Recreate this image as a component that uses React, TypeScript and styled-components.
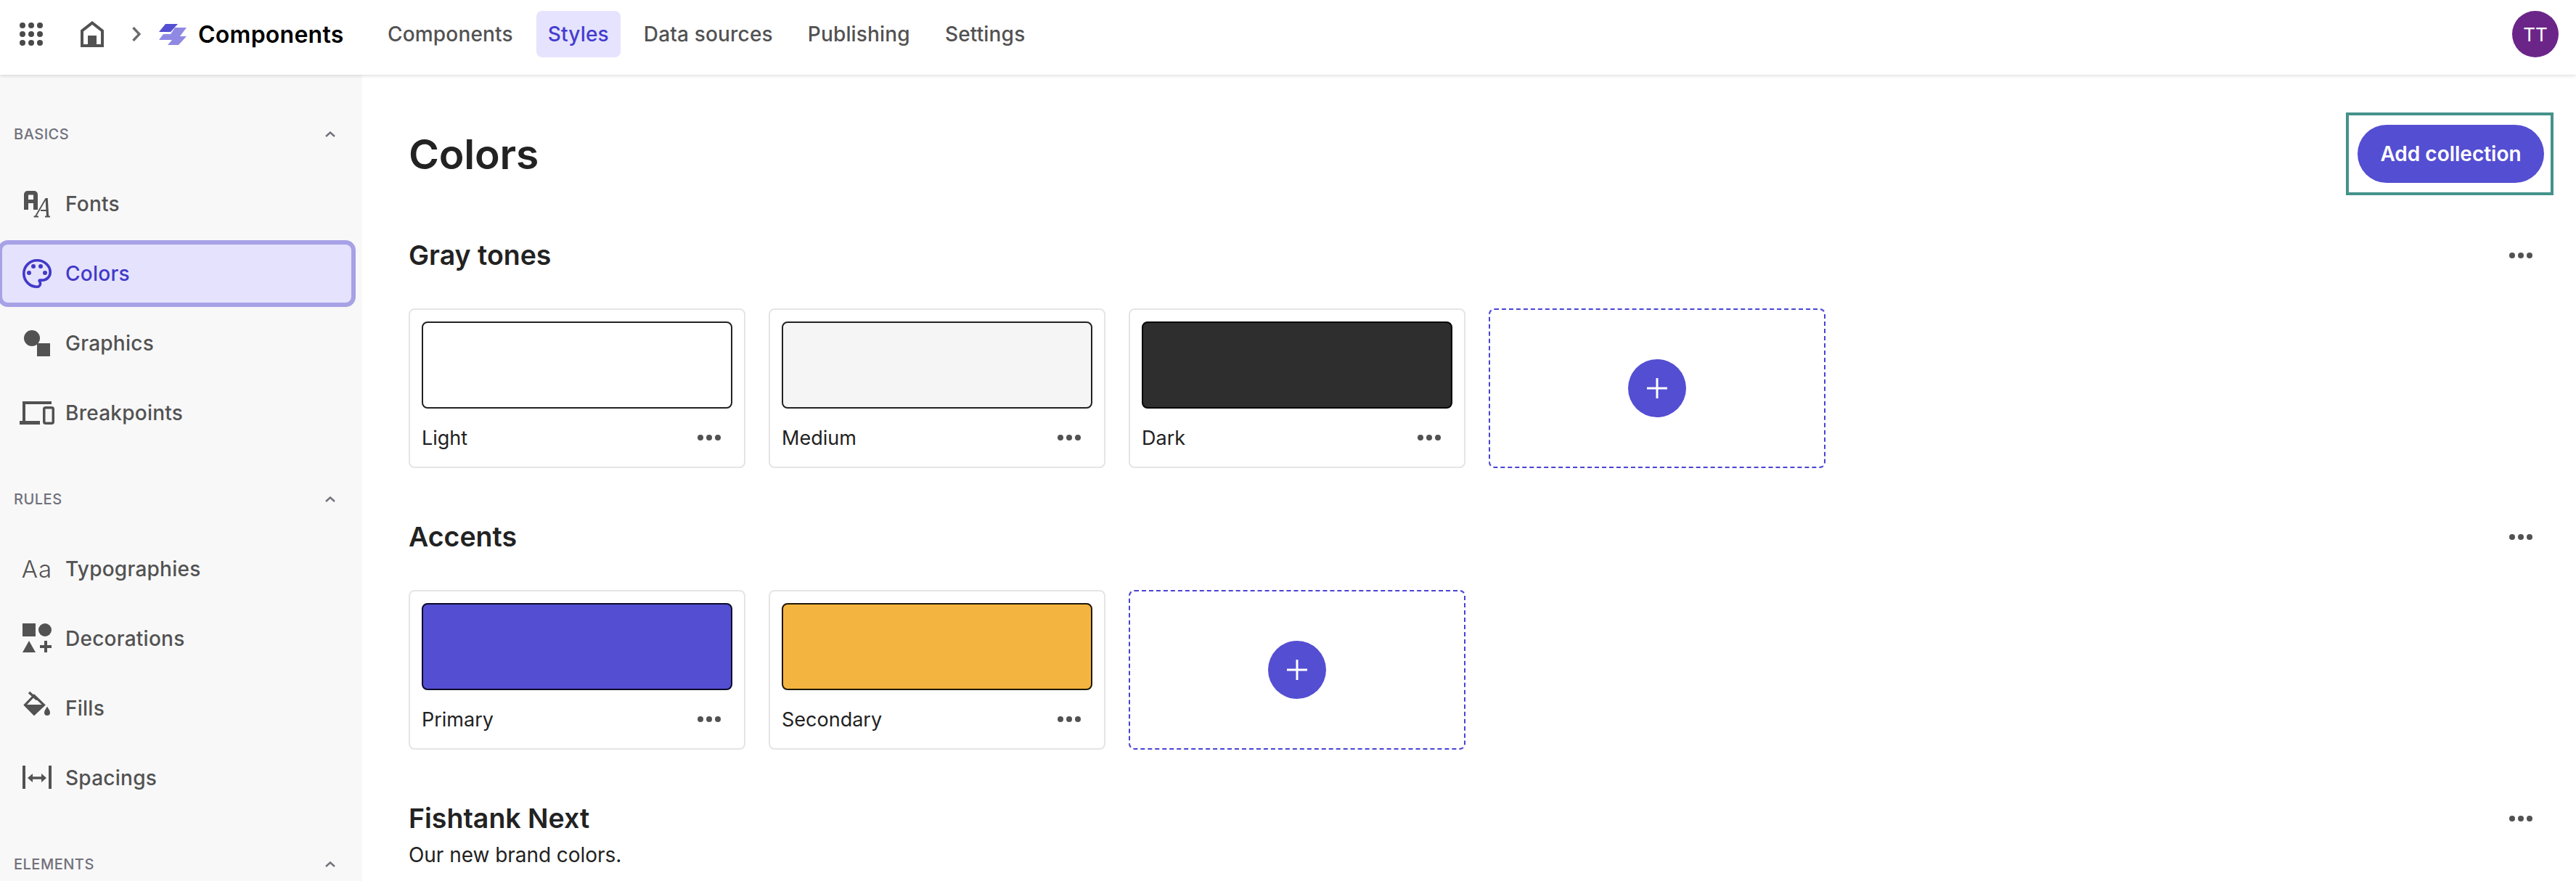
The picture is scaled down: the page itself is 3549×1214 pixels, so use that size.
import React from "react";
import styled, { createGlobalStyle } from "styled-components";

const Global = createGlobalStyle`
  html, body { margin: 0; padding: 0; height: 100%; overflow: hidden; background: #fff; }
  body { font-family: Inter, "Liberation Sans", sans-serif; color: #222; }
  * { box-sizing: border-box; }
`;

const Page = styled.div`
  width: 3549px;
  height: 1214px;
  display: flex;
  flex-direction: column;
  overflow: hidden;
`;

const Header = styled.header`
  flex: none;
  height: 103px;
  padding: 15px 24px 24px 27px;
  display: flex;
  align-items: center;
  background: #fff;
  box-shadow: 0 1px 5px rgba(0, 0, 0, 0.16);
  position: relative;
  z-index: 2;
`;

const Crumbs = styled.div`
  display: flex;
  align-items: center;
  svg { display: block; flex: none; }
`;

const Spaced = styled.span<{ $gap: number }>`
  display: flex;
  margin-right: ${(p) => p.$gap}px;
`;

const ProductName = styled.span`
  width: 201px;
  font-size: 32px;
  font-weight: 600;
  color: #000;
  letter-spacing: 0.25px;
  white-space: nowrap;
`;

const Nav = styled.nav`
  margin-left: 44px;
  display: flex;
  gap: 16px;
`;

const NavItem = styled.a<{ $active?: boolean }>`
  height: 64px;
  padding: 0 16px;
  display: flex;
  align-items: center;
  border-radius: 8px;
  font-size: 28px;
  letter-spacing: 0.17px;
  font-weight: 500;
  color: ${(p) => (p.$active ? "#443dcf" : "#525252")};
  background: ${(p) => (p.$active ? "#e6e3fe" : "transparent")};
`;

const Avatar = styled.div`
  margin-left: auto;
  width: 64px;
  height: 64px;
  border-radius: 50%;
  background: #6b2589;
  color: #fff;
  font-size: 26px;
  display: flex;
  align-items: center;
  justify-content: center;
`;

const Body = styled.div`
  flex: 1;
  display: flex;
  min-height: 0;
`;

const Sidebar = styled.aside`
  flex: none;
  width: 499px;
  background: #f8f8f8;
  padding: 70px 0 0 3px;
`;

const GroupHead = styled.div`
  height: 24px;
  width: 459px;
  padding: 0 0 0 16px;
  display: flex;
  align-items: center;
  justify-content: space-between;
  font-size: 20px;
  font-weight: 500;
  letter-spacing: 0.5px;
  color: #71717c;
`;

const Caret = styled.svg`
  display: block;
  width: 14px;
  height: 8px;
  fill: none;
  stroke: #71717c;
  stroke-width: 2.4;
`;

const Group = styled.section`
  margin-bottom: 67px;
`;

const GroupList = styled.div`
  margin-top: 44px;
  display: flex;
  flex-direction: column;
  gap: 16px;
`;

const Item = styled.a<{ $active?: boolean }>`
  height: 80px;
  width: 481px;
  padding-left: 24px;
  display: flex;
  align-items: center;
  gap: 15px;
  border-radius: 8px;
  font-size: 28px;
  letter-spacing: 0.25px;
  font-weight: 500;
  color: ${(p) => (p.$active ? "#413ac9" : "#525252")};
  background: ${(p) => (p.$active ? "#e5e2fd" : "transparent")};
  box-shadow: ${(p) => (p.$active ? "0 0 0 6px #a7a1e6" : "none")};
`;

const ItemIcon = styled.svg<{ $active?: boolean }>`
  display: block;
  flex: none;
  width: 48px;
  height: 48px;
  fill: ${(p) => (p.$active ? "#413ac9" : "#525252")};
  stroke: none;
`;

const AaIcon = styled.span`
  flex: none;
  width: 48px;
  text-align: center;
  font-size: 33px;
  font-weight: 300;
  letter-spacing: 1px;
  color: #525252;
`;

const Main = styled.main`
  flex: 1;
  min-width: 0;
  padding: 52px 31px 0 64px;
`;

const TitleRow = styled.div`
  display: flex;
  align-items: center;
  justify-content: space-between;
  margin-bottom: 61px;
`;

const PageTitle = styled.h1`
  margin: 0;
  font-size: 57px;
  font-weight: 600;
  color: #222;
  letter-spacing: -0.2px;
`;

const Highlight = styled.div`
  border: 4px solid #44928a;
  padding: 13px 9px 13px 12px;
`;

const PrimaryButton = styled.button`
  display: block;
  width: 257px;
  height: 80px;
  border: 0;
  border-radius: 40px;
  background: #544ed2;
  color: #fff;
  font-family: inherit;
  font-size: 28px;
  font-weight: 600;
`;

const Section = styled.section`
  margin-bottom: 73px;
`;

const SectionHead = styled.div`
  display: flex;
  align-items: flex-start;
  justify-content: space-between;
  padding-right: 29px;
`;

const SectionTitle = styled.h2`
  margin: 0;
  font-size: 37.5px;
  line-height: 44px;
  font-weight: 600;
  color: #222;
`;

const SectionText = styled.p`
  margin: 10px 0 0;
  font-size: 28px;
  line-height: 36px;
  letter-spacing: -0.05px;
  color: #222;
`;

const MenuSlot = styled.span`
  height: 44px;
  display: flex;
  align-items: center;
`;

const Dots = styled.svg`
  display: block;
  flex: none;
  width: 32px;
  height: 8px;
  fill: #525252;
`;

const CardRow = styled.div`
  margin-top: 51px;
  display: flex;
  gap: 32px;
`;

const Card = styled.div`
  width: 464px;
  height: 220px;
  padding: 16px;
  border: 2px solid #e5e5e5;
  border-radius: 8px;
  background: #fff;
`;

const Swatch = styled.div<{ $fill: string; $edge: string }>`
  height: 120px;
  border: 2px solid ${(p) => p.$edge};
  border-radius: 8px;
  background: ${(p) => p.$fill};
`;

const CardFoot = styled.div`
  margin-top: 22px;
  padding-right: 16px;
  height: 36px;
  display: flex;
  align-items: center;
  justify-content: space-between;
  font-size: 27px;
  color: #222;
`;

const AddCard = styled.button`
  width: 464px;
  height: 220px;
  padding: 0;
  border: 2px dashed #4a43d4;
  border-radius: 8px;
  background: #fff;
  display: flex;
  align-items: center;
  justify-content: center;
`;

const AddCircle = styled.span`
  width: 80px;
  height: 80px;
  border-radius: 50%;
  background: #544ed2;
  display: flex;
  align-items: center;
  justify-content: center;
  svg { display: block; stroke: #fff; stroke-width: 3; }
`;

const ThreeDots = () => (
  <Dots viewBox="0 0 32 8">
    <circle cx="4" cy="4" r="4" />
    <circle cx="16" cy="4" r="4" />
    <circle cx="28" cy="4" r="4" />
  </Dots>
);

const CaretUp = () => (
  <Caret viewBox="0 0 14 8">
    <path d="M1 7 L7 1.5 L13 7" />
  </Caret>
);

const GridIcon = () => (
  <svg width="32" height="32" viewBox="0 0 32 32" fill="#4a4a4a">
    {[4, 16, 28].flatMap((y) =>
      [4, 16, 28].map((x) => <circle key={`${x}-${y}`} cx={x} cy={y} r="4" />)
    )}
  </svg>
);

const HomeIcon = () => (
  <svg width="32" height="36" viewBox="0 0 32 36">
    <path d="M2 34 V13.5 L16 2.5 L30 13.5 V34 Z" fill="none" stroke="#525252" strokeWidth="4" />
    <rect x="10" y="20" width="12" height="16" fill="#525252" />
  </svg>
);

const ChevronIcon = () => (
  <svg width="12" height="20" viewBox="0 0 12 20">
    <path d="M1.5 1 L10 10 L1.5 19" fill="none" stroke="#6b6b6b" strokeWidth="3.4" />
  </svg>
);

const LogoIcon = () => (
  <svg width="38" height="30" viewBox="0 0 38 30">
    <path d="M9 1 H26 L16 12 H0 Z" fill="#544ed2" />
    <path d="M22 6 H38 L29 18 H38 L27 30 H12 L18 23 H0 L6 15 H16 Z" fill="#9089e3" />
  </svg>
);

const PlusIcon = () => (
  <svg width="30" height="30" viewBox="0 0 30 30">
    <path d="M15 1 V29 M1 15 H29" />
  </svg>
);

const FontsGlyph = () => (
  <ItemIcon viewBox="0 0 48 48">
    <path
      fillRule="evenodd"
      d="M6 32 V11 a5 5 0 0 1 5 -5 h9 a5 5 0 0 1 5 5 V32 h-6 V23 h-7 V32 Z M12 11.5 h7 V18 h-7 Z"
    />
    <path
      d="M22 41 L36 17 M29 33 H38.5 M19.5 41.5 H26 M35 41.5 H42"
      fill="none"
      stroke="#525252"
      strokeWidth="1.8"
    />
    <path d="M35.5 16 H38.8 L40.2 41.5 H37 Z" />
  </ItemIcon>
);

const PaletteGlyph = () => (
  <ItemIcon $active viewBox="0 0 48 48">
    <g transform="translate(24 24) scale(1.82) translate(-12 -12)">
      <path
        d="M12 2C6.49 2 2 6.49 2 12s4.49 10 10 10c1.38 0 2.5-1.12 2.5-2.5 0-.61-.23-1.2-.64-1.67-.08-.1-.13-.21-.13-.33 0-.28.22-.5.5-.5H16c3.31 0 6-2.69 6-6 0-4.96-4.49-9-10-9z"
        fill="none"
        stroke="#413ac9"
        strokeWidth="2"
      />
    </g>
    <circle cx="13" cy="23" r="3" />
    <circle cx="19" cy="14" r="3" />
    <circle cx="29" cy="14" r="3" />
    <circle cx="35" cy="23" r="3" />
  </ItemIcon>
);

const GraphicsGlyph = () => (
  <ItemIcon viewBox="0 0 48 48">
    <circle cx="17" cy="17" r="11" />
    <rect x="24" y="24" width="18" height="18" />
  </ItemIcon>
);

const BreakpointsGlyph = () => (
  <ItemIcon viewBox="0 0 48 48">
    <path d="M4 8 H44 V12 H8 V35 H28 V40 H0 V35 H4 Z" />
    <rect x="33.75" y="16.75" width="12.5" height="21.5" rx="2" fill="none" stroke="#525252" strokeWidth="3.5" />
  </ItemIcon>
);

const DecorationsGlyph = () => (
  <ItemIcon viewBox="0 0 48 48">
    <rect x="4" y="3" width="18" height="18" />
    <circle cx="35" cy="12" r="9" />
    <path d="M13 27 L22 43 H4 Z" />
    <path d="M34 27 H38 V33 H44 V37 H38 V43 H34 V37 H28 V33 H34 Z" />
  </ItemIcon>
);

const FillsGlyph = () => (
  <ItemIcon viewBox="0 0 48 48">
    <path d="M13 2 L24 12" fill="none" stroke="#525252" strokeWidth="3.4" />
    <path d="M20 6.5 L33.5 19.5 L20 32 L7.5 19.5 Z" fill="none" stroke="#525252" strokeWidth="3.2" />
    <path d="M6 19 H35 L20 34 Z" />
    <path d="M38 21.5 C40 25 42 27 42 30 A4 4 0 0 1 34 30 C34 27 36 25 38 21.5 Z" />
  </ItemIcon>
);

const SpacingsGlyph = () => (
  <ItemIcon viewBox="0 0 48 48">
    <rect x="4" y="7" width="4" height="32" />
    <rect x="40" y="7" width="4" height="32" />
    <path d="M11 24 L18 18 V22.2 H30 V18 L37 24 L30 30 V25.8 H18 V30 Z" />
  </ItemIcon>
);

type NavEntry = { label: string; icon: React.ReactNode; active?: boolean };

const groups: { title: string; items: NavEntry[] }[] = [
  {
    title: "BASICS",
    items: [
      { label: "Fonts", icon: <FontsGlyph /> },
      { label: "Colors", icon: <PaletteGlyph />, active: true },
      { label: "Graphics", icon: <GraphicsGlyph /> },
      { label: "Breakpoints", icon: <BreakpointsGlyph /> },
    ],
  },
  {
    title: "RULES",
    items: [
      { label: "Typographies", icon: <AaIcon>Aa</AaIcon> },
      { label: "Decorations", icon: <DecorationsGlyph /> },
      { label: "Fills", icon: <FillsGlyph /> },
      { label: "Spacings", icon: <SpacingsGlyph /> },
    ],
  },
  { title: "ELEMENTS", items: [] },
];

const collections = [
  {
    title: "Gray tones",
    colors: [
      { name: "Light", fill: "#ffffff", edge: "#222222" },
      { name: "Medium", fill: "#f5f5f5", edge: "#222222" },
      { name: "Dark", fill: "#2e2e2e", edge: "#060606" },
    ],
  },
  {
    title: "Accents",
    colors: [
      { name: "Primary", fill: "#544ed2", edge: "#0c0a2a" },
      { name: "Secondary", fill: "#f4b540", edge: "#201708" },
    ],
  },
];

export default function App() {
  return (
    <Page>
      <Global />
      <Header>
        <Crumbs>
          <Spaced $gap={52}><GridIcon /></Spaced>
          <Spaced $gap={39}><HomeIcon /></Spaced>
          <Spaced $gap={25}><ChevronIcon /></Spaced>
          <Spaced $gap={16}><LogoIcon /></Spaced>
          <ProductName>Components</ProductName>
        </Crumbs>
        <Nav>
          <NavItem>Components</NavItem>
          <NavItem $active>Styles</NavItem>
          <NavItem>Data sources</NavItem>
          <NavItem>Publishing</NavItem>
          <NavItem>Settings</NavItem>
        </Nav>
        <Avatar>TT</Avatar>
      </Header>
      <Body>
        <Sidebar>
          {groups.map((g) => (
            <Group key={g.title}>
              <GroupHead>
                {g.title}
                <CaretUp />
              </GroupHead>
              {g.items.length > 0 && (
                <GroupList>
                  {g.items.map((i) => (
                    <Item key={i.label} $active={i.active}>
                      {i.icon}
                      {i.label}
                    </Item>
                  ))}
                </GroupList>
              )}
            </Group>
          ))}
        </Sidebar>
        <Main>
          <TitleRow>
            <PageTitle>Colors</PageTitle>
            <Highlight>
              <PrimaryButton>Add collection</PrimaryButton>
            </Highlight>
          </TitleRow>
          {collections.map((c) => (
            <Section key={c.title}>
              <SectionHead>
                <SectionTitle>{c.title}</SectionTitle>
                <MenuSlot><ThreeDots /></MenuSlot>
              </SectionHead>
              <CardRow>
                {c.colors.map((s) => (
                  <Card key={s.name}>
                    <Swatch $fill={s.fill} $edge={s.edge} />
                    <CardFoot>
                      {s.name}
                      <ThreeDots />
                    </CardFoot>
                  </Card>
                ))}
                <AddCard>
                  <AddCircle><PlusIcon /></AddCircle>
                </AddCard>
              </CardRow>
            </Section>
          ))}
          <Section>
            <SectionHead>
              <div>
                <SectionTitle>Fishtank Next</SectionTitle>
                <SectionText>Our new brand colors.</SectionText>
              </div>
              <MenuSlot><ThreeDots /></MenuSlot>
            </SectionHead>
          </Section>
        </Main>
      </Body>
    </Page>
  );
}
